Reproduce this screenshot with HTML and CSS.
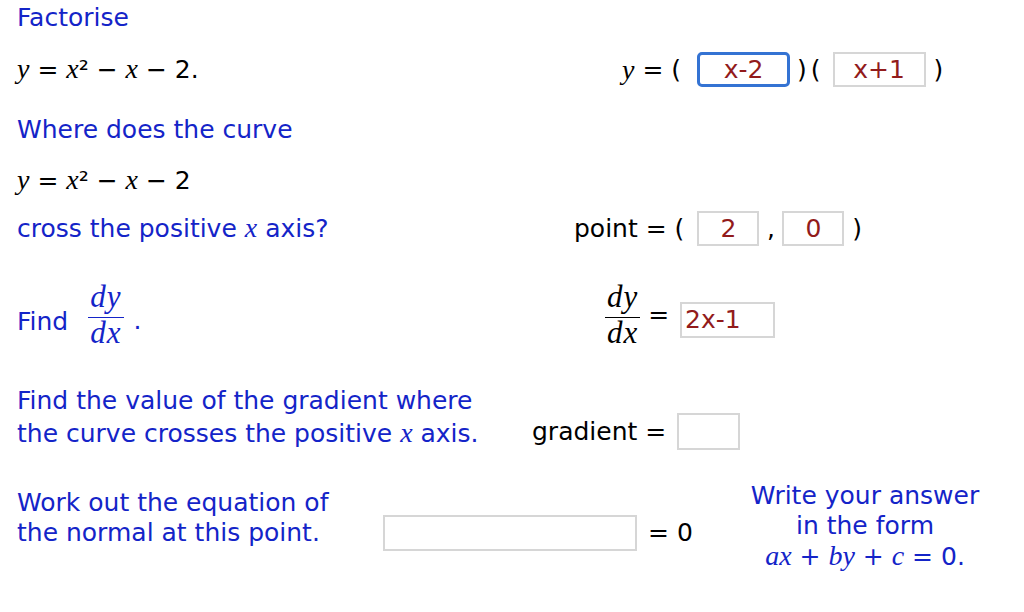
FILE: index.html
```html
<!DOCTYPE html>
<html lang="en">
<head>
    <meta charset="UTF-8">
    <meta name="viewport" content="width=device-width, initial-scale=1.0">
    <title>Factorise</title>
    <link rel="stylesheet" href="styles.css">
</head>
<body>
    <div class="page">
        <div class="row row-title">
            <div class="prompt">Factorise</div>
        </div>

        <div class="row row-factor">
            <div class="left"><span class="m">y</span> = <span class="m">x</span>² − <span class="m">x</span> − 2.</div>
            <div class="answer">
                <span class="m">y</span><span class="op"> = (</span>
                <input type="text" class="box box-wide focus" value="x-2">
                <span class="op paren-mid">)(</span>
                <input type="text" class="box box-wide" value="x+1">
                <span class="op paren-end">)</span>
            </div>
        </div>

        <div class="row row-where">
            <div class="prompt">Where does the curve</div>
        </div>

        <div class="row row-curve">
            <div class="left"><span class="m">y</span> = <span class="m">x</span>² − <span class="m">x</span> − 2</div>
        </div>

        <div class="row row-point">
            <div class="left prompt">cross the positive <span class="m">x</span> axis?</div>
            <div class="answer">
                <span class="op">point = (</span>
                <input type="text" class="box box-small first" value="2">
                <span class="op comma">,</span>
                <input type="text" class="box box-small" value="0">
                <span class="op"> )</span>
            </div>
        </div>

        <div class="row row-deriv">
            <div class="left prompt find">
                <span class="find-word">Find</span>
                <span class="frac"><span class="num">dy</span><span class="den">dx</span></span>
                <span class="dot">.</span>
            </div>
            <div class="answer">
                <span class="frac"><span class="num">dy</span><span class="den">dx</span></span>
                <span class="op"> = </span>
                <input type="text" class="box box-left" value="2x-1">
            </div>
        </div>

        <div class="row row-grad">
            <div class="left prompt lines">
                <div>Find the value of the gradient where</div>
                <div>the curve crosses the positive <span class="m">x</span> axis.</div>
            </div>
            <div class="answer">
                <span class="op">gradient = </span>
                <input type="text" class="box box-grad" value="">
            </div>
        </div>

        <div class="row row-normal">
            <div class="left prompt lines">
                <div>Work out the equation of</div>
                <div>the normal at this point.</div>
            </div>
            <div class="answer">
                <input type="text" class="box box-line" value="">
                <span class="op eq0">= 0</span>
            </div>
            <div class="note prompt">
                <div>Write your answer</div>
                <div>in the form</div>
                <div class="note-math"><span class="m">ax</span> + <span class="m">by</span> + <span class="m">c</span> = 0.</div>
            </div>
        </div>
    </div>
</body>
</html>
```

FILE: styles.css
```css
*{
    margin: 0;
    padding: 0;
    box-sizing: border-box;
}

body{
    font-family: "DejaVu Sans", Verdana, sans-serif;
    font-size: 25px;
    color: #000;
    background: #fff;
}

.page{
    padding: 3px 0 0 17px;
}

.row{
    display: flex;
    align-items: center;
    line-height: 30px;
}

.prompt{
    color: #1424c8;
}

.m{
    font-family: "Liberation Serif", "Times New Roman", serif;
    font-style: italic;
    font-size: 28px;
    line-height: 1;
}

.op{
    white-space: pre;
}

/* answer boxes */
.box{
    font-family: "DejaVu Sans", Verdana, sans-serif;
    font-size: 25px;
    color: #921b1b;
    background: #fff;
    border: 2px solid #d6d6d6;
    height: 35px;
    padding: 0;
    text-align: center;
    outline: none;
}
.box.focus{
    border: 3px solid #3473d3;
    border-radius: 5px;
}
.box-wide{
    width: 93px;
}
.box-small{
    width: 62px;
}
.box-left{
    width: 95px;
    height: 36px;
    text-align: left;
    padding-left: 3px;
    margin-left: 3px;
    margin-top: 10px;
}
.box-grad{
    width: 63px;
    height: 37px;
    margin-left: 3px;
}
.box-line{
    width: 254px;
    height: 36px;
}

/* rows */
.row-title{
    height: 30px;
}

.row-factor{
    margin-top: 19px;
    height: 35px;
}
.row-factor .left{
    width: 605px;
}
.row-factor .answer{
    display: flex;
    align-items: center;
}
.row-factor .focus{
    margin-left: 16px;
}
.paren-mid{
    margin: 0 8px 0 7px;
    letter-spacing: 4px;
}
.paren-end{
    margin-left: 8px;
}

.row-where{
    margin-top: 28px;
    height: 30px;
}

.row-curve{
    margin-top: 21px;
    height: 30px;
}

.row-point{
    margin-top: 15px;
    height: 35px;
}
.row-point .left{
    width: 557px;
}
.row-point .answer{
    display: flex;
    align-items: center;
}
.row-point .first{
    margin-left: 13px;
}
.comma{
    width: 23px;
    text-align: center;
}

.row-deriv{
    margin-top: 35px;
    height: 67px;
}
.row-deriv .left{
    width: 588px;
    display: flex;
    align-items: center;
}
.find-word{
    position: relative;
    top: 7px;
}
.find .frac{
    margin-left: 20px;
}
.dot{
    margin-left: 10px;
    position: relative;
    top: 6px;
}
.row-deriv .answer{
    display: flex;
    align-items: center;
}

.frac{
    display: inline-flex;
    flex-direction: column;
    align-items: center;
    font-family: "Liberation Serif", "Times New Roman", serif;
    font-style: italic;
    font-size: 31px;
    letter-spacing: 1px;
}
.frac .num{
    line-height: 30px;
    padding: 0 2px 5px;
}
.frac .den{
    line-height: 30px;
    border-top: 1.5px solid currentColor;
    padding: 0 2px;
}

.row-grad{
    margin-top: 36px;
    height: 66px;
    align-items: flex-end;
}
.row-grad .left{
    width: 515px;
    line-height: 33px;
}
.row-grad .answer{
    display: flex;
    align-items: center;
}

.row-normal{
    margin-top: 31px;
    align-items: flex-start;
}
.row-normal .left{
    width: 366px;
    margin-top: 7px;
}
.row-normal .answer{
    display: flex;
    align-items: center;
    margin-top: 34px;
}
.eq0{
    width: 60px;
    margin-left: 11px;
}
.note{
    width: 250px;
    margin-left: 32px;
    text-align: center;
    line-height: 30px;
}
.note-math{
    line-height: 32px;
}
```
